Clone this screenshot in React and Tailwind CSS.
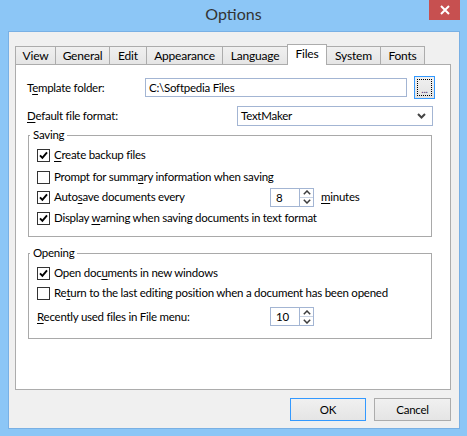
import React from "react";

const tabs = [
  ["View", 41],
  ["General", 55],
  ["Edit", 38],
  ["Appearance", 77],
  ["Language", 66],
  ["Files", 40],
  ["System", 55],
  ["Fonts", 45],
];

function U({ children }) {
  return <span className="underline underline-offset-[2px]">{children}</span>;
}

function Check({ checked }) {
  return (
    <span className="flex h-[13px] w-[13px] shrink-0 items-center justify-center border border-[#333333] bg-white">
      {checked && (
        <svg width="9" height="9" viewBox="0 0 9 9">
          <path d="M1 4.3 L3.4 6.8 L8 1.4" fill="none" stroke="#000" strokeWidth="1.9" />
        </svg>
      )}
    </span>
  );
}

function Spin({ value }) {
  return (
    <div className="flex h-[19px] w-[44px] shrink-0 border border-[#a3b5d3] bg-white">
      <div className="flex-1 pl-[5px] leading-[17px]">{value}</div>
      <div className="flex w-[14px] flex-col border-l border-[#a3b5d3]">
        <div className="flex flex-1 items-center justify-center border-b border-[#c9d3e3]">
          <svg width="8" height="5" viewBox="0 0 8 5">
            <path d="M0.8 4.2 L4 1 L7.2 4.2" fill="none" stroke="#3c3c3c" strokeWidth="1.5" />
          </svg>
        </div>
        <div className="flex flex-1 items-center justify-center">
          <svg width="8" height="5" viewBox="0 0 8 5">
            <path d="M0.8 0.8 L4 4 L7.2 0.8" fill="none" stroke="#3c3c3c" strokeWidth="1.5" />
          </svg>
        </div>
      </div>
    </div>
  );
}

function Row({ checked, children, className = "" }) {
  return (
    <div className={"flex h-[20px] items-center pl-[8px] " + className}>
      <Check checked={checked} />
      <span className="ml-[4px] whitespace-nowrap">{children}</span>
    </div>
  );
}

function Legend({ children }) {
  return (
    <div className="-mt-[9px] ml-[1px] h-[16px] w-fit bg-white px-[3px] leading-[16px]">
      {children}
    </div>
  );
}

export default function App() {
  return (
    <div className="flex h-[436px] w-[467px] flex-col bg-[#8cc6f6] font-['Lato',sans-serif] text-[11.5px] tracking-[-0.25px] text-black">
      {/* title bar */}
      <div className="relative flex h-[31px] shrink-0 items-center justify-center pb-[3px]">
        <span className="text-[16px] tracking-normal text-[#333333]">Options</span>
        <div className="absolute right-[7px] top-0 flex h-[20px] w-[31px] items-center justify-center bg-[#c75050]">
          <svg width="10" height="10" viewBox="0 0 10 10">
            <path d="M1 1 L9 9 M9 1 L1 9" stroke="#fff" strokeWidth="2" />
          </svg>
        </div>
      </div>

      {/* client */}
      <div className="ml-[8px] flex h-[398px] w-[452px] flex-col border border-[#79b0e4] bg-[#f0f0f0] px-[6px] pt-[12px]">
        <div className="flex h-[20px] items-end">
          {tabs.map(([name, w], i) => {
            const active = name === "Files";
            return (
              <div
                key={name}
                style={{ width: w }}
                className={
                  "flex items-center justify-center whitespace-nowrap border-x border-t border-[#acacac] text-[12px] tracking-[-0.2px] " +
                  (i > 0 ? "-ml-px " : "") +
                  (active
                    ? "relative z-10 -mb-px h-[21px] bg-white pb-[2px]"
                    : "h-[18px] bg-gradient-to-b from-[#f0f0f0] to-[#e5e5e5]")
                }
              >
                {name}
              </div>
            );
          })}
        </div>

        <div className="flex h-[326px] w-[436px] flex-col border border-[#acacac] bg-white pl-[11px]">
          <div className="mt-[11px] flex h-[23px] items-center">
            <span className="w-[118px]">
              T<U>e</U>mplate folder:
            </span>
            <div className="h-[19px] w-[262px] border border-[#a3b5d3] pl-[3px] leading-[17px]">
              C:\Softpedia Files
            </div>
            <div className="ml-[7px] flex h-[23px] w-[21px] items-center justify-center border border-[#3399ff] bg-gradient-to-b from-[#f0f0f0] to-[#e3e3e3]">
              <div className="flex h-[17px] w-[15px] items-end justify-center border border-dotted border-black text-[10px] leading-[12px] text-[#4b2a6e]">
                ...
              </div>
            </div>
          </div>

          <div className="mt-[7px] flex h-[20px] items-center">
            <span className="w-[210px]">
              <U>D</U>efault file format:
            </span>
            <div className="flex h-[20px] w-[196px] items-center justify-between border border-[#a3b5d3] pl-[3px] pr-[6px]">
              <span>TextMaker</span>
              <svg width="9" height="6" viewBox="0 0 9 6">
                <path d="M1 1 L4.5 4.5 L8 1" fill="none" stroke="#444" strokeWidth="2" />
              </svg>
            </div>
          </div>

          {/* Saving */}
          <div className="ml-[1px] mt-[9px] w-[404px] border border-[#a9a9a9] pb-[8px]">
            <Legend>Saving</Legend>
            <Row checked className="mt-[2px]">
              <U>C</U>reate backup files
            </Row>
            <Row className="mt-[2px]">
              Prompt for summ<U>a</U>ry information when saving
            </Row>
            <div className="flex h-[20px] items-center pl-[8px]">
              <Check checked />
              <span className="ml-[4px] w-[216px] whitespace-nowrap">
                Auto<U>s</U>ave documents every
              </span>
              <Spin value="8" />
              <span className="ml-[7px]">
                <U>m</U>inutes
              </span>
            </div>
            <Row checked className="mt-[1px]">
              Display <U>w</U>arning when saving documents in text format
            </Row>
          </div>

          {/* Opening */}
          <div className="ml-[1px] mt-[16px] w-[404px] border border-[#a9a9a9] pb-[12px]">
            <Legend>Opening</Legend>
            <Row checked className="mt-[2px]">
              Open doc<U>u</U>ments in new windows
            </Row>
            <Row>
              Re<U>t</U>urn to the last editing position when a document has been opened
            </Row>
            <div className="mt-[4px] flex h-[19px] items-center pl-[8px]">
              <span className="w-[233px] whitespace-nowrap">
                <U>R</U>ecently used files in File menu:
              </span>
              <Spin value="10" />
            </div>
          </div>
        </div>

        <div className="mt-[8px] flex justify-end gap-[8px] pr-[2px]">
          <div className="flex h-[23px] w-[76px] items-center justify-center border border-[#3399ff] bg-gradient-to-b from-[#f0f0f0] to-[#e5e5e5]">
            OK
          </div>
          <div className="flex h-[23px] w-[77px] items-center justify-center border border-[#acacac] bg-gradient-to-b from-[#f0f0f0] to-[#e5e5e5]">
            Cancel
          </div>
        </div>
      </div>
    </div>
  );
}
